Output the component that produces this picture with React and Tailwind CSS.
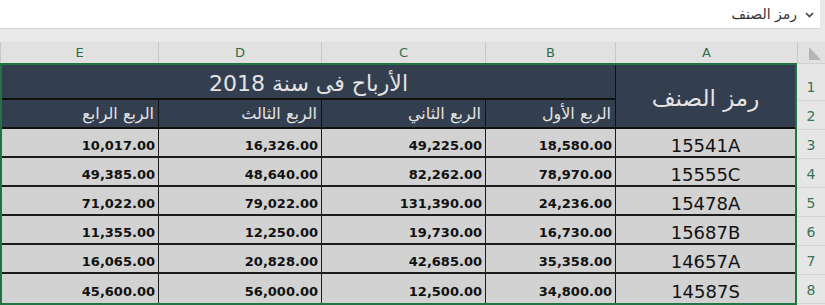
import React from "react";

const cols = ["A", "B", "C", "D", "E"];
const colWidths = ["w-[182px]", "w-[130px]", "w-[164px]", "w-[163px]", "w-[158px]"];

const quarters = ["الربع الأول", "الربع الثاني", "الربع الثالث", "الربع الرابع"];

const rows = [
  ["15541A", "18,580.00", "49,225.00", "16,326.00", "10,017.00"],
  ["15555C", "78,970.00", "82,262.00", "48,640.00", "49,385.00"],
  ["15478A", "24,236.00", "131,390.00", "79,022.00", "71,022.00"],
  ["15687B", "16,730.00", "19,730.00", "12,250.00", "11,355.00"],
  ["14657A", "35,358.00", "42,685.00", "20,828.00", "16,065.00"],
  ["14587S", "34,800.00", "12,500.00", "56,000.00", "45,600.00"],
];

const rowHeights = ["h-[37px]", "h-[29px]", "h-[29px]", "h-[29px]", "h-[29px]", "h-[29px]", "h-[29px]", "h-[29px]"];

function App() {
  return (
    <div
      dir="rtl"
      className="w-[825px] h-[305px] overflow-hidden bg-[#e9e9e9] font-['DejaVu_Sans',sans-serif]"
    >
      {/* name box */}
      <div className="h-[29px] mr-[5px] bg-white border-b border-[#d2d2d2] flex items-center">
        <span className="w-[22px] flex justify-center mt-[1px]">
          <svg width="9" height="6" viewBox="0 0 9 6">
            <path d="M1 1 L4.5 4.5 L8 1" fill="none" stroke="#444" strokeWidth="1.6" />
          </svg>
        </span>
        <span className="text-[14px] text-[#333] mr-[1px]">رمز الصنف</span>
      </div>

      <div className="h-[13px]" />

      {/* column headers */}
      <div className="flex h-[21px] bg-[#e1e1e1]">
        <div className="w-[28px] shrink-0 border-l border-[#c8c8c8] flex items-end justify-start pr-[4px] pb-[3px]">
          <svg width="12" height="13" viewBox="0 0 12 13">
            <polygon points="0,0 0,13 12,13" fill="#b5b5b5" />
          </svg>
        </div>
        {cols.map((c, i) => (
          <div
            key={c}
            className={`${colWidths[i]} shrink-0 border-l border-[#c8c8c8] flex items-center justify-center text-[13px] text-[#2f6d4c]`}
          >
            {c}
          </div>
        ))}
      </div>

      {/* body */}
      <div className="flex">
        {/* row numbers */}
        <div className="w-[28px] shrink-0 bg-[#e6e6e6] border-t border-[#d0d0d0]">
          {rowHeights.map((h, i) => (
            <div
              key={i}
              className={`${h} border-b border-[#d4d4d4] flex items-end justify-center pb-[2px] text-[14px] text-[#3a7556]`}
            >
              {i + 1}
            </div>
          ))}
        </div>

        {/* selected range */}
        <div className="w-[797px] shrink-0 border-2 border-[#217346] bg-[#d2d2d2]">
          <div className="grid grid-cols-[180px_130px_164px_163px_156px] grid-rows-[35px_29px_29px_29px_29px_29px_29px_29px]">
            <div className="row-span-2 bg-[#333f4f] border-l border-b-2 border-[#111] flex items-center justify-center text-[23px] text-[#e4e4e4] pt-[4px]">
              رمز الصنف
            </div>
            <div className="col-span-4 bg-[#333f4f] border-b-2 border-[#111] flex items-center justify-center text-[22px] text-[#e4e4e4] pt-[4px]">
              الأرباح فى سنة 2018
            </div>
            {quarters.map((q, i) => (
              <div
                key={q}
                className={`bg-[#333f4f] border-b-2 border-[#111] ${i < 3 ? "border-l" : ""} flex items-center justify-start pr-[4px] text-[16px] text-[#e4e4e4]`}
              >
                {q}
              </div>
            ))}

            {rows.map((r, ri) =>
              r.map((v, ci) => (
                <div
                  key={ri + "-" + ci}
                  className={`${ri < 5 ? "border-b-2" : ""} ${ci < 4 ? "border-l" : ""} border-[#1c1c1c] flex items-center ${
                    ci === 0
                      ? "justify-center text-[18px] pt-[5px]"
                      : "justify-start pr-[3px] text-[13px] font-bold pt-[6px]"
                  } text-[#111]`}
                >
                  <span dir="ltr">{v}</span>
                </div>
              ))
            )}
          </div>
        </div>
      </div>
    </div>
  );
}

export default App;
